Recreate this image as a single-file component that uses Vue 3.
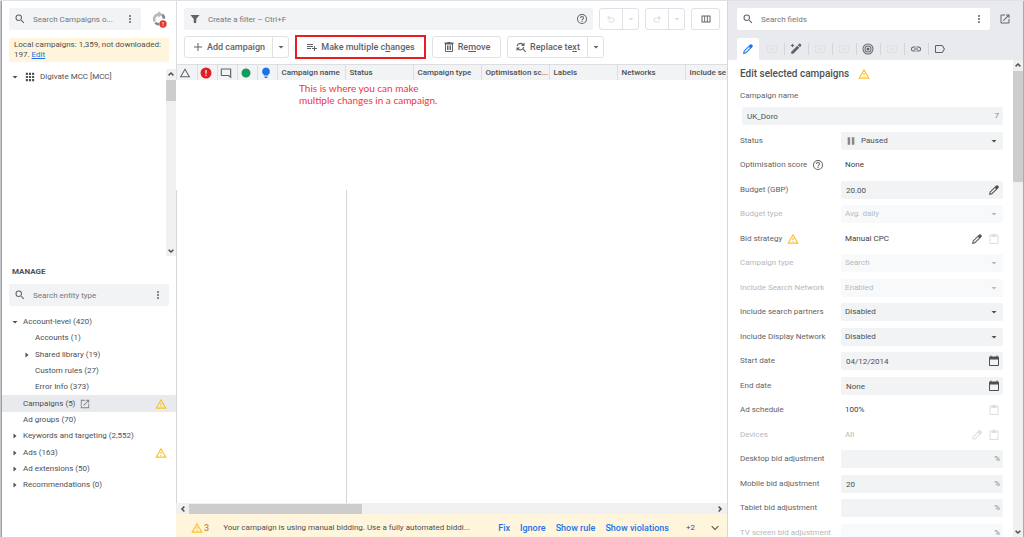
<script setup>
import { h } from 'vue'

const paths = {
  search: 'M15.5 14h-.79l-.28-.27A6.47 6.47 0 0 0 16 9.5 6.5 6.5 0 1 0 9.5 16c1.61 0 3.09-.59 4.23-1.57l.27.28v.79l5 4.99L20.49 19l-4.99-5zm-6 0a4.5 4.5 0 1 1 0-9 4.5 4.5 0 0 1 0 9z',
  more: 'M12 8a2 2 0 1 0 0-4 2 2 0 0 0 0 4zm0 2a2 2 0 1 0 0 4 2 2 0 0 0 0-4zm0 6a2 2 0 1 0 0 4 2 2 0 0 0 0-4z',
  filter: 'M3 4c2.5 3.2 6.500 8 6.500 8v7c0 .6.400 1 1 1h3c.6 0 1-.4 1-1v-7s4-4.800 6.500-8z',
  help: 'M11 18h2v-2h-2v2zm1-16a10 10 0 1 0 0 20 10 10 0 0 0 0-20zm0 18a8 8 0 1 1 0-16 8 8 0 0 1 0 16zm0-14a4 4 0 0 0-4 4h2a2 2 0 1 1 4 0c0 2-3 1.750-3 5h2c0-2.250 3-2.500 3-5a4 4 0 0 0-4-4z',
  undo: 'M7 19v-2h7.100c1.600 0 2.900-1.300 2.900-3s-1.300-3-2.900-3H7.800l2.600 2.600L9 15l-5-5 5-5 1.400 1.400L7.800 9h6.300c2.700 0 4.900 2.200 4.900 5s-2.200 5-4.900 5z',
  redo: 'M17 19v-2H9.900C8.300 17 7 15.700 7 14s1.300-3 2.900-3h6.300l-2.600 2.600L15 15l5-5-5-5-1.400 1.400L16.200 9H9.900C7.200 9 5 11.200 5 14s2.200 5 4.900 5z',
  columns: 'M3 5v14h18V5H3zm5.500 12H5V7h3.500v10zm5.250 0h-3.500V7h3.500v10zm5.250 0h-3.500V7H19v10z',
  add: 'M20 13h-7v7h-2v-7H4v-2h7V4h2v7h7v2z',
  down: 'M7 10l5 5 5-5z',
  right: 'M9 7l6 5-6 5z',
  playlist: 'M14 10H2v2h12v-2zm0-4H2v2h12V6zm4 8v-4h-2v4h-4v2h4v4h2v-4h4v-2h-4zM2 16h8v-2H2v2z',
  trash: 'M15.500 3l-1-1h-5l-1 1H3v3h1v14a2 2 0 0 0 2 2h12a2 2 0 0 0 2-2V6h1V3h-5.500zM18 20H6V7h12v13zM8 9h3v9H8V9zm5 0h3v9h-3V9z',
  replace: 'M11 6c1.400 0 2.600.6 3.500 1.500L12 10h7V3l-2.600 2.600A8 8 0 0 0 3 10.500h2.300A6 6 0 0 1 11 6zm6 9.500A7.500 7.500 0 0 0 18.600 12h-2.300A5.500 5.500 0 0 1 7.500 15.500L10 13H3v7l2.600-2.600A8 8 0 0 0 15.200 17L20.500 22.500l1.700-1.700z',
  triangle: 'M12 6.500L19 18.500H5L12 6.500M12 2.500L1.500 20.500h21L12 2.500z',
  warning: 'M12 6l7.500 13h-15L12 6m0-4.500L.5 21.500h23L12 1.500zm1.200 14.500h-2.400v2h2.400v-2zm0-6h-2.400v4h2.400v-4z',
  error: 'M12 1a11 11 0 1 0 0 22 11 11 0 0 0 0-22zm1.300 17h-2.600v-2.400h2.600V18zm0-4.500h-2.600V6h2.600v7.500z',
  comment: 'M20 3H3a1.500 1.500 0 0 0-1.500 1.500v12A1.500 1.500 0 0 0 3 18h13.500l6 5V4.500A1.500 1.500 0 0 0 21 3zm.2 15L17.200 16H3.700V5.200h16.500V18z',
  dot: 'M12 3a9 9 0 1 0 0 18 9 9 0 0 0 0-18z',
  bulb: 'M9 21c0 .6.400 1 1 1h4c.6 0 1-.4 1-1v-2H9v2zm3-20a8 8 0 0 0-4.500 14.500V17h9v-1.500A8 8 0 0 0 12 1z',
  open: 'M19 19H5V5h7V3H5a2 2 0 0 0-2 2v14a2 2 0 0 0 2 2h14a2 2 0 0 0 2-2v-7h-2v7zM14 3v2h3.600l-9.800 9.800 1.400 1.400L19 6.400V10h2V3h-7z',
  openBox: 'M2 2v20h20V12h-2v8H4V4h8V2H2zm12 0v2h4.600L8 14.600 9.400 16 20 5.400V10h2V2h-8z',
  apps: 'M2 2h5v5H2zm7.500 0h5v5h-5zM17 2h5v5h-5zM2 9.500h5v5H2zm7.500 0h5v5h-5zm7.500 0h5v5h-5zM2 17h5v5H2zm7.500 0h5v5h-5zm7.500 0h5v5h-5z',
  pencil: 'M20.500 3.500a3.400 3.400 0 0 0-4.800 0L3.500 15.700 2 22l6.300-1.500L20.500 8.300a3.400 3.400 0 0 0 0-4.800zM7.300 18.700l-2.500.5.500-2.500 8.700-8.700 2 2-8.700 8.700z',
  pencilThin: 'M21.500 5.500l-3-3a1.700 1.700 0 0 0-2.400 0L3 15.600V21h5.400L21.500 7.900a1.700 1.700 0 0 0 0-2.400zM7.500 19H5v-2.500l9-9 2.500 2.500-9 9z',
  wand: 'M21.700 2.300a3 3 0 0 0-4.300 0L15.500 4.200l4.300 4.300 1.900-1.900a3 3 0 0 0 0-4.300zM14.500 5.500l4 4L6.500 21.500H2.500v-4zM5 1l1.300 2.700L9 5 6.300 6.300 5 9 3.700 6.300 1 5l2.700-1.300z',
  target: 'M12 1a11 11 0 1 0 0 22 11 11 0 0 0 0-22zm0 20a9 9 0 1 1 0-18 9 9 0 0 1 0 18zm0-16a7 7 0 1 0 0 14 7 7 0 0 0 0-14zm0 12a5 5 0 1 1 0-10 5 5 0 0 1 0 10zm0-8a3 3 0 1 0 0 6 3 3 0 0 0 0-6z',
  link: 'M3.900 12A3.100 3.100 0 0 1 7 8.900h4V7H7a5 5 0 0 0 0 10h4v-1.900H7A3.100 3.100 0 0 1 3.900 12zM8 13h8v-2H8v2zm9-6h-4v1.900h4a3.100 3.100 0 0 1 0 6.200h-4V17h4a5 5 0 0 0 0-10z',
  label: 'M16 4H4a2 2 0 0 0-2 2v12c0 1.100.9 2 2 2h12c.7 0 1.300-.3 1.600-.8L22 12l-4.400-7.200A2 2 0 0 0 16 4zm0 14H4V6h12l3.600 6L16 18z',
  box: 'M20 4H4a2 2 0 0 0-2 2v12c0 1.100.9 2 2 2h16a2 2 0 0 0 2-2V6a2 2 0 0 0-2-2zm0 14H4V6h16v12zM10 9h5v6h-5z',
  pause: 'M4 3h6v18H4zm10 0h6v18h-6z',
  clipboard: 'M19 3h-4.200a3 3 0 0 0-5.600 0H5a2 2 0 0 0-2 2v15c0 1.100.9 2 2 2h14a2 2 0 0 0 2-2V5a2 2 0 0 0-2-2zm0 17H5V5h2v3h10V5h2v15z',
  calendar: 'M20 3h-1V1h-2v2H7V1H5v2H4a2 2 0 0 0-2 2v15c0 1.100.9 2 2 2h16a2 2 0 0 0 2-2V5a2 2 0 0 0-2-2zm0 17H4V9h16v11z',
  chevDown: 'M18 7.600L12 13.600 6 7.600 4.600 9l7.400 7.400L19.400 9z',
  up: 'M12 7l-7 7 2.500 2.500L12 12l4.500 4.500L19 14z',
  dn: 'M12 17l-7-7 2.500-2.500L12 12l4.500-4.500L19 10z',
  lt: 'M7 12l7-7 2.500 2.500L12 12l4.500 4.500L14 19z',
  rt: 'M17 12l-7-7-2.500 2.500L12 12l-4.500 4.500L10 19z'
}

const Icon = (props) =>
  h('svg', { viewBox: '0 0 24 24', 'aria-hidden': 'true' }, [h('path', { d: paths[props.name] })])
Icon.props = ['name']

const entities = [
  { text: 'Account-level (420)', arrow: 'down' },
  { text: 'Accounts (1)', child: true },
  { text: 'Shared library (19)', child: true, arrow: 'right' },
  { text: 'Custom rules (27)', child: true },
  { text: 'Error Info (373)', child: true },
  { text: 'Campaigns (5)', selected: true, open: true, warn: true },
  { text: 'Ad groups (70)' },
  { text: 'Keywords and targeting (2,552)', arrow: 'right' },
  { text: 'Ads (163)', arrow: 'right', warn: true },
  { text: 'Ad extensions (50)', arrow: 'right' },
  { text: 'Recommendations (0)', arrow: 'right' }
]

const headIcons = [
  { name: 'triangle', label: 'Changes', tone: 'grey' },
  { name: 'error', label: 'Errors', tone: 'red' },
  { name: 'comment', label: 'Comments', tone: 'grey' },
  { name: 'dot', label: 'State', tone: 'green' },
  { name: 'bulb', label: 'Ideas', tone: 'blue' }
]
const headTexts = ['Campaign name', 'Status', 'Campaign type', 'Optimisation sc...', 'Labels', 'Networks', 'Include se']

const tabs = [
  { icon: 'pencil', label: 'Edit', state: 'active' },
  { icon: 'box', label: 'Images', state: 'off' },
  { icon: 'wand', label: 'Tools' },
  { icon: 'box', label: 'Videos', state: 'off' },
  { icon: 'box', label: 'Assets', state: 'off' },
  { icon: 'target', label: 'Targeting' },
  { icon: 'box', label: 'Ads', state: 'off' },
  { icon: 'link', label: 'Links' },
  { icon: 'label', label: 'Labels' }
]

const fields = [
  { label: 'Status', kind: 'select', value: 'Paused', pause: true },
  { label: 'Optimisation score', kind: 'text', value: 'None', help: true },
  { label: 'Budget (GBP)', kind: 'input', value: '20.00', icon: 'pencil' },
  { label: 'Budget type', kind: 'select', value: 'Avg. daily', off: true },
  { label: 'Bid strategy', kind: 'text', value: 'Manual CPC', warn: true, edit: 'pencil', paste: true },
  { label: 'Campaign type', kind: 'select', value: 'Search', off: true },
  { label: 'Include Search Network', kind: 'select', value: 'Enabled', off: true },
  { label: 'Include search partners', kind: 'select', value: 'Disabled' },
  { label: 'Include Display Network', kind: 'select', value: 'Disabled' },
  { label: 'Start date', kind: 'input', value: '04/12/2014', icon: 'calendar' },
  { label: 'End date', kind: 'input', value: 'None', icon: 'calendar' },
  { label: 'Ad schedule', kind: 'text', value: '100%', paste: true },
  { label: 'Devices', kind: 'text', value: 'All', off: true, edit: 'pencilThin', paste: true },
  { label: 'Desktop bid adjustment', kind: 'input', value: '', unit: '%' },
  { label: 'Mobile bid adjustment', kind: 'input', value: '20', unit: '%' },
  { label: 'Tablet bid adjustment', kind: 'input', value: '', unit: '%' },
  { label: 'TV screen bid adjustment', kind: 'input', value: '', unit: '%', off: true }
]
</script>

<template>
  <div class="app">
    <aside class="left">
      <div class="left-top">
        <div class="search grow">
          <Icon name="search" class="ic" />
          <input type="text" aria-label="Search campaigns" placeholder="Search Campaigns o..." />
          <button class="bare" aria-label="Search options"><Icon name="more" class="ic" /></button>
        </div>
        <button class="bare sync" aria-label="Sync status">
          <svg class="sync-ring" viewBox="0 0 24 24" aria-hidden="true">
            <path class="ring-a" d="M12 5a7.500 7.500 0 0 0-6.500 11" />
            <path class="tip-a" d="M11 0l6 5-6 5z" />
            <path class="ring-b" d="M16.500 5.500a7.500 7.500 0 0 1 3 6" />
            <path class="ring-b" d="M6.500 17.500a7.500 7.500 0 0 0 5.500 2.500" />
          </svg>
          <Icon name="error" class="ic sync-badge" />
        </button>
      </div>
      <p class="notice">Local campaigns: 1,359, not downloaded: 197. <a href="#">Edit</a></p>
      <div class="accounts">
        <div class="account">
          <Icon name="down" class="ic" /><Icon name="apps" class="ic apps" /><span>Digivate MCC [MCC]</span>
        </div>
        <div class="vbar">
          <Icon name="up" class="sb" />
          <div class="thumb short"></div>
          <Icon name="dn" class="sb end" />
        </div>
      </div>
      <h2 class="manage">MANAGE</h2>
      <div class="search entity">
        <Icon name="search" class="ic" />
        <input type="text" aria-label="Search entity type" placeholder="Search entity type" />
        <button class="bare" aria-label="Entity options"><Icon name="more" class="ic" /></button>
      </div>
      <ul class="tree">
        <li v-for="e in entities" :key="e.text" :class="{ child: e.child, selected: e.selected }">
          <span class="twist"><Icon v-if="e.arrow" :name="e.arrow" class="ic" /></span>
          <span>{{ e.text }}</span>
          <Icon v-if="e.open" name="openBox" class="ic tree-open" />
          <Icon v-if="e.warn" name="warning" class="ic amber tree-warn" />
        </li>
      </ul>
    </aside>

    <main class="center">
      <div class="bars">
        <div class="bar">
          <div class="search grow">
            <Icon name="filter" class="ic" />
            <input type="text" aria-label="Filter" placeholder="Create a filter – Ctrl+F" />
            <button class="bare" aria-label="Help"><Icon name="help" class="ic" /></button>
          </div>
          <div class="group off">
            <button class="narrow" aria-label="Undo"><Icon name="undo" class="ic" /></button>
            <button class="drop" aria-label="Undo list"><Icon name="down" class="ic" /></button>
          </div>
          <div class="group off">
            <button class="narrow" aria-label="Redo"><Icon name="redo" class="ic" /></button>
            <button class="drop" aria-label="Redo list"><Icon name="down" class="ic" /></button>
          </div>
          <div class="group"><button class="cols" aria-label="Columns"><Icon name="columns" class="ic" /></button></div>
        </div>
        <div class="bar">
          <div class="group">
            <button class="add"><Icon name="add" class="ic" />Add campaign</button>
            <button class="drop" aria-label="More ways to add"><Icon name="down" class="ic" /></button>
          </div>
          <div class="group marked">
            <button class="multi"><Icon name="playlist" class="ic" /><span>Make multiple c<u>h</u>anges</span></button>
          </div>
          <div class="group">
            <button class="remove"><Icon name="trash" class="ic" /><span>Re<u>m</u>ove</span></button>
          </div>
          <div class="group">
            <button class="replace"><Icon name="replace" class="ic" /><span>Replace te<u>x</u>t</span></button>
            <button class="drop" aria-label="More replace options"><Icon name="down" class="ic" /></button>
          </div>
        </div>
      </div>
      <div class="head-wrap">
        <table class="grid">
          <colgroup>
            <col v-for="i in headIcons" :key="i.name" class="c-icon" />
            <col v-for="t in headTexts" :key="t" class="c-text" />
          </colgroup>
          <thead>
            <tr>
              <th v-for="i in headIcons" :key="i.name" scope="col" :aria-label="i.label">
                <Icon :name="i.name" class="ic" :class="i.tone" />
              </th>
              <th v-for="t in headTexts" :key="t" scope="col" class="t">{{ t }}</th>
            </tr>
          </thead>
        </table>
      </div>
      <div class="canvas">
        <p class="note">This is where you can make<br />multiple changes in a campaign.</p>
        <div class="frozen"></div>
      </div>
      <div class="hbar">
        <Icon name="lt" class="sb" />
        <div class="thumb"></div>
        <Icon name="rt" class="sb end" />
      </div>
      <footer class="alert">
        <Icon name="warning" class="ic amber" />
        <span class="count">3</span>
        <span class="msg">Your campaign is using manual bidding. Use a fully automated biddi...</span>
        <a href="#">Fix</a><a href="#">Ignore</a><a href="#">Show rule</a><a href="#">Show violations</a>
        <span class="plus">+2</span>
        <button class="bare" aria-label="Expand"><Icon name="chevDown" class="ic" /></button>
      </footer>
    </main>

    <section class="right">
      <header class="right-head">
        <div class="bar">
          <div class="search white grow">
            <Icon name="search" class="ic" />
            <input type="text" aria-label="Search fields" placeholder="Search fields" />
            <button class="bare" aria-label="Field options"><Icon name="more" class="ic" /></button>
          </div>
          <button class="bare popout" aria-label="Open in new window"><Icon name="open" class="ic" /></button>
        </div>
        <nav class="tabs">
          <button v-for="t in tabs" :key="t.label" :aria-label="t.label" :class="t.state"><Icon :name="t.icon" class="ic" /></button>
        </nav>
      </header>
      <div class="right-body">
        <form class="form" @submit.prevent>
          <h1>Edit selected campaigns <Icon name="warning" class="ic amber" /></h1>
          <label class="name-label" for="campaign-name">Campaign name</label>
          <div class="field name-field">
            <input id="campaign-name" type="text" value="UK_Doro" /><span class="unit">7</span>
          </div>
          <div class="rows">
            <div v-for="(f, n) in fields" :key="f.label" class="row" :class="{ off: f.off }">
              <label :for="f.kind === 'text' ? null : 'field-' + n">
                {{ f.label }}
                <Icon v-if="f.help" name="help" class="ic" />
                <Icon v-if="f.warn" name="warning" class="ic amber" />
              </label>
              <div v-if="f.kind === 'select'" class="field">
                <Icon v-if="f.pause" name="pause" class="ic pause" />
                <select :id="'field-' + n" :disabled="f.off" :class="{ indent: f.pause }"><option>{{ f.value }}</option></select>
                <Icon name="down" class="ic arrow" />
              </div>
              <div v-else-if="f.kind === 'input'" class="field">
                <input :id="'field-' + n" type="text" :value="f.value" :disabled="f.off" />
                <span v-if="f.unit" class="unit">{{ f.unit }}</span>
                <button v-else type="button" class="bare" :aria-label="'Pick ' + f.label"><Icon :name="f.icon" class="ic" /></button>
              </div>
              <div v-else class="plain">
                <span>{{ f.value }}</span>
                <button v-if="f.edit" type="button" class="bare" :aria-label="'Edit ' + f.label"><Icon :name="f.edit" class="ic" /></button>
                <button v-if="f.paste" type="button" class="bare faint" :aria-label="'Paste ' + f.label"><Icon name="clipboard" class="ic" /></button>
              </div>
            </div>
          </div>
        </form>
        <div class="vbar">
          <Icon name="up" class="sb" />
          <div class="thumb tall"></div>
          <Icon name="dn" class="sb end" />
        </div>
      </div>
    </section>
  </div>
</template>

<style>
html, body { margin: 0; background: #fff; }
</style>

<style scoped>
.app {
  display: grid;
  grid-template-columns: 176px minmax(0, 1fr) 297px;
  height: 100vh;
  overflow: hidden;
  box-sizing: border-box;
  border-top: 1px solid #dfe1e6;
  font-family: Roboto, "Liberation Sans", sans-serif;
  font-size: 8px;
  line-height: 10px;
  color: #4c5055;
}
.app * { box-sizing: border-box; }
button, input, select { font: inherit; color: inherit; margin: 0; padding: 0; border: 0; background: none; outline: 0; }
input { min-width: 0; }
.ic { width: 12px; height: 12px; fill: currentColor; flex: none; display: block; }
.amber { color: #fbc02d; }
.grey { color: #5f6368; }
.red { color: #e01e26; }
.green { color: #109d58; }
.blue { color: #1a73e8; }
.bare { display: flex; align-items: center; justify-content: center; }
.grow { flex: 1; min-width: 0; }
.bar { display: flex; align-items: center; gap: 6px; }

.search { display: flex; align-items: center; height: 22px; padding: 0 5px; background: #f1f3f4; border-radius: 2px; color: #5f6368; }
.search input { flex: 1; margin: 0 0 0 7px; height: 20px; }
.search input::placeholder { color: #74787d; opacity: 1; }
.search.white { background: #fff; }

/* left panel */
.left { display: flex; flex-direction: column; border-left: 1px solid #c6c8ce; box-shadow: inset 1px 0 #9b9da1; min-height: 0; }
.left-top { display: flex; align-items: center; padding: 7px 9px 0 8px; gap: 10px; }
.sync { position: relative; width: 16px; height: 16px; }
.sync-ring { width: 16px; height: 16px; fill: none; stroke-width: 4; }
.ring-a { stroke: #b8babd; }
.tip-a { fill: #b8babd; }
.ring-b { stroke: #85888c; }
.sync-badge { position: absolute; right: 0; bottom: -1px; width: 8px; height: 8px; color: #e03a2f; }
.notice { margin: 8px 7px 0 8px; padding: 2px 0 2px 5px; min-height: 24px; background: #fef5dc; }
.notice a { color: #1a73e8; text-decoration: underline; }
.accounts { display: flex; height: 187px; margin-top: 7px; }
.account { flex: 1; display: flex; align-items: center; align-self: flex-start; height: 16px; padding-left: 8px; }
.account .apps { width: 10px; height: 10px; margin: 0 5px 0 4px; }
.vbar { display: flex; flex-direction: column; width: 10px; background: #f0f0f0; }
.sb { width: 10px; height: 10px; fill: #505050; flex: none; display: block; }
.end { margin-top: auto; }
.thumb { background: #cdcdcd; flex: none; }
.short { height: 21px; margin-top: 1px; }
.tall { height: 111px; margin-top: 1px; }
.manage { margin: 11px 0 0 11px; font-size: 8px; line-height: 10px; font-weight: 700; }
.entity { margin: 7px 7px 0 8px; }
.tree { list-style: none; margin: 8px 0 0 1px; padding: 0; }
.tree li { display: flex; align-items: center; height: 16px; padding-left: 7px; }
.tree li:nth-child(3n) { height: 17px; }
.tree li.child { padding-left: 19px; }
.tree li.selected { background: #e8eaed; }
.twist { width: 14px; height: 12px; }
.tree-open { color: #7b7f84; width: 10px; height: 10px; margin-left: 5px; }
.tree-warn { margin-left: auto; margin-right: 9px; }

/* center */
.center { display: flex; flex-direction: column; min-width: 0; min-height: 0; }
.bars { display: flex; flex-direction: column; gap: 6px; padding: 7px 7px 6px; border-left: 1px solid #dcdde0; }
.group { display: flex; height: 22px; border: 1px solid #dfe1e4; border-radius: 3px; font-size: 9px; font-weight: 500; color: #5f6368; }
.group button { display: flex; align-items: center; justify-content: center; gap: 3px; white-space: nowrap; }
.group .drop { width: 16px; border-left: 1px solid #dfe1e4; }
.group.off .ic { color: #dcdee0; }
.narrow { width: 22px; }
.cols { width: 27px; }
.add { width: 87px; }
.multi { width: 127px; }
.remove { width: 67px; }
.replace { width: 79px; }
.group.marked { height: 24px; margin: -1px 0; border: 2px solid #ea1c24; border-radius: 0; }
.head-wrap { overflow: hidden; border-top: 1px solid #dcdee1; border-left: 1px solid #dcdde0; background: #f1f3f4; flex: none; }
.grid { table-layout: fixed; border-collapse: collapse; width: 100%; }
.c-icon { width: 20px; }
.c-text { width: 68px; }
.c-text:last-child { width: auto; }
.grid th { height: 15px; padding: 0 0 0 2px; border-right: 1px solid #dcdee1; font-weight: 500; text-align: left; white-space: nowrap; overflow: hidden; }
.grid th.t { padding-left: 4px; }
.grid th:last-child { border-right: 0; }
.canvas { flex: 1; display: flex; flex-direction: column; min-height: 0; }
.note { margin: 0; padding: 2px 0 0 123px; height: 110px; font-family: Lato, sans-serif; font-size: 10px; line-height: 12px; color: #f0353c; }
.frozen { flex: 1; width: 171px; border: solid #d6d6d6; border-width: 0 1px; }
.hbar { display: flex; height: 11px; align-items: center; background: #f0f0f0; flex: none; padding-left: 2px; }
.hbar .thumb { width: 173px; height: 10px; margin-left: 1px; }
.hbar .end { margin: 0 2px 0 auto; }
.alert { display: flex; align-items: center; height: 23px; flex: none; padding: 4px 6px 0 15px; background: #fef5dc; white-space: nowrap; }
.alert .count { margin: 0 14px 0 1px; font-size: 9px; color: #e8833a; font-weight: 500; }
.alert .msg { flex: 1; min-width: 0; overflow: hidden; text-overflow: ellipsis; }
.alert a { margin-left: 10px; color: #1a73e8; text-decoration: none; font-size: 9px; font-weight: 500; }
.alert .plus { margin: 0 14px 0 17px; }

/* right panel */
.right { display: flex; flex-direction: column; min-width: 0; min-height: 0; border-left: 1px solid #d5d7da; border-right: 1px solid #a9abae; }
.right-head { background: #e8eaed; padding: 7px 0 0 9px; color: #5f6368; }
.popout { width: 18px; margin: 0 9px 0 0; }
.tabs { display: flex; gap: 2px; margin-top: 8px; }
.tabs button { position: relative; display: flex; align-items: center; justify-content: center; width: 22px; height: 22px; border-radius: 3px 3px 0 0; }
.tabs button + button + button::before { content: ""; position: absolute; left: -1px; top: 5px; width: 1px; height: 12px; background: #d3d5d9; }
.tabs .active { background: #fff; color: #1a73e8; }
.tabs .off { color: #dfe1e3; }
.right-body { display: flex; flex: 1; min-height: 0; overflow: hidden; }
.form { flex: 1; min-width: 0; padding: 8px 10px 0 12px; }
.form h1 { display: flex; align-items: center; gap: 9px; margin: 0; font-size: 10px; line-height: 12px; font-weight: 500; }
.name-label { display: block; margin-top: 11px; color: #5f6368; }
.field { position: relative; display: flex; align-items: center; height: 18px; background: #f1f3f4; border-radius: 2px; padding-right: 3px; }
.field input { flex: 1; height: 18px; padding-left: 5px; }
.field select { flex: 1; height: 18px; padding-left: 4px; appearance: none; opacity: 1; }
.field select.indent { padding-left: 20px; }
.field .arrow { position: absolute; right: 3px; pointer-events: none; }
.field .pause { position: absolute; left: 5px; width: 10px; height: 10px; color: #85888c; }
.unit { color: #85888c; }
.name-field { margin: 6px 0 0 2px; }
.name-field .unit { margin-right: 1px; }
.rows { margin-top: 7px; }
.row { display: grid; grid-template-columns: 101px minmax(0, 1fr); align-items: center; margin-bottom: 6px; }
.row:nth-child(even) { margin-bottom: 7px; }
.row label { display: flex; align-items: center; gap: 5px; white-space: nowrap; color: #5f6368; }
.plain { display: flex; align-items: center; gap: 5px; height: 18px; padding: 0 3px 0 4px; color: #3c4043; }
.plain span { flex: 1; }
.plain .bare { color: #54585d; }
.plain .faint { color: #dcdee0; }
.row.off label, .row.off .plain, .row.off select { color: #b6b9bc; }
.row.off .field { background: #f8f9fa; }
.row.off .arrow { color: #b6b9bc; }
.row.off .plain .bare { color: #dcdee0; }
</style>
